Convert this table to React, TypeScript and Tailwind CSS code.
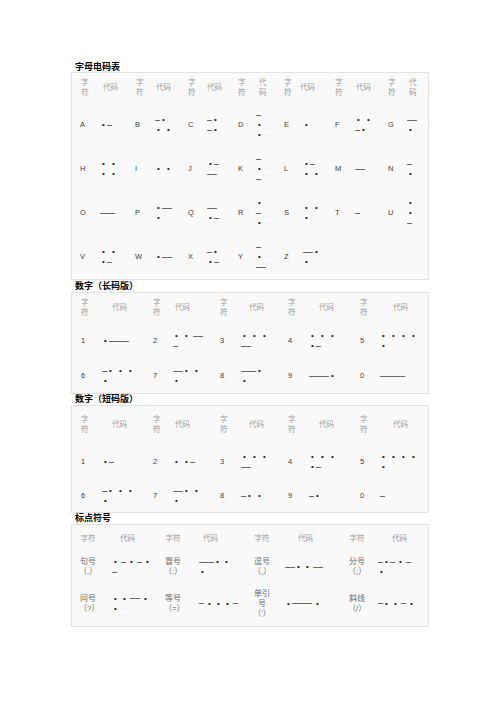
import React from "react";

type Entry = [string, string];

const HEAD = "text-[7.5px] leading-[10px] text-[#9c9c9c]";
const LABEL = "text-[7.5px] leading-[10px] text-[#3c3c3c]";
const TITLE = "pl-[4px] text-[9px] font-bold text-black";

const Sym = ({ ch, gap }: { ch: string; gap: string }) => {
  if (ch === "•") return <span className="w-[7px] shrink-0 text-center text-[8px]">•</span>;
  if (ch === "–") return <span className="w-[5px] shrink-0 text-center text-[9px]">–</span>;
  return <span className={gap} />;
};

const Code = ({ code, gap = "w-[3px] shrink-0" }: { code: string; gap?: string }) => (
  <div className="flex flex-col text-[#222]">
    {code.split("|").map((line, i) => (
      <div key={i} className="flex h-[10px] items-center leading-none">
        {Array.from(line).map((ch, j) => (
          <Sym key={j} ch={ch} gap={gap} />
        ))}
      </div>
    ))}
  </div>
);

const Stack = ({ text, className }: { text: string; className?: string }) => (
  <div className={className}>
    {text.split("|").map((t, i) => (
      <div key={i}>{t}</div>
    ))}
  </div>
);

// 字母
const T1_GRID =
  "grid grid-cols-[20px_35px_20px_33px_19px_31px_18px_28px_19px_32px_20px_33px_19px_21px] items-center";

const t1Head: Entry[] = [
  ["pl-[1px]", "字|符"],
  ["pl-[3px]", "代码"],
  ["pl-[1px]", "字|符"],
  ["pl-[1px]", "代码"],
  ["", "字|符"],
  ["", "代码"],
  ["", "字|符"],
  ["pl-[3px]", "代|码"],
  ["", "字|符"],
  ["-ml-[3px]", "代码"],
  ["", "字|符"],
  ["pl-[1px]", "代码"],
  ["", "字|符"],
  ["pl-[2px]", "代|码"],
];

const t1Rows: Entry[][] = [
  [["A", "•–"], ["B", "–•|• •"], ["C", "–•|–•"], ["D", "–|•|•"], ["E", "•"], ["F", "• •|–•"], ["G", "––|•"]],
  [["H", "• •|• •"], ["I", "• •"], ["J", "•–|––"], ["K", "–|•|–"], ["L", "•–|• •"], ["M", "––"], ["N", "–|•"]],
  [["O", "–––"], ["P", "•––|•"], ["Q", "––|•–"], ["R", "•|–|•"], ["S", "• •|•"], ["T", "–"], ["U", "•|•|–"]],
  [["V", "• •|•–"], ["W", "•––"], ["X", "–•|•–"], ["Y", "–|•|––"], ["Z", "––•|•"]],
];

// 数字
const T2_GRID = "grid grid-cols-[21px_51px_20px_47px_21px_47px_21px_51px_20px_48px] items-center";

const numHead: Entry[] = [
  ["", "字|符"],
  ["pl-[10px]", "代码"],
  ["", "字|符"],
  ["pl-[2px]", "代码"],
  ["", "字|符"],
  ["pl-[8px]", "代码"],
  ["", "字|符"],
  ["pl-[10px]", "代码"],
  ["", "字|符"],
  ["pl-[13px]", "代码"],
];

const longRows: Entry[][] = [
  [["1", "•––––"], ["2", "• • ––|–"], ["3", "• • •|––"], ["4", "• • •|•–"], ["5", "• • • •|•"]],
  [["6", "–• • •|•"], ["7", "––• •|•"], ["8", "–––•|•"], ["9", "––––•"], ["0", "–––––"]],
];

const shortRows: Entry[][] = [
  [["1", "•–"], ["2", "• •–"], ["3", "• • •|––"], ["4", "• • •|•–"], ["5", "• • • •|•"]],
  [["6", "–• • •|•"], ["7", "––• •|•"], ["8", "–• •"], ["9", "–•"], ["0", "–"]],
];

// 标点
const T4_GRID = "grid grid-cols-[33px_52px_35px_54px_32px_61px_32px_50px] items-center";
const t4CodeHead = ["pl-[8px]", "pl-[4px]", "pl-[13px]", "pl-[14px]"];
const t4LabelPad = ["", "", "", "ml-[2px]"];

const punctRows: Entry[][] = [
  [
    ["句号|（.）", "• – • – •|–"],
    ["冒号|（:）", "–––• •|•"],
    ["逗号|（,）", "––• • ––"],
    ["分号|（;）", "–•– • –|•"],
  ],
  [
    ["问号|（?）", "• • –– •|•"],
    ["等号|（=）", "– • • • –"],
    ["单引|号|（'）", "•–––– •"],
    ["斜线|（/）", "–• • – •"],
  ],
];

const NumTable = ({ rows, heights }: { rows: Entry[][]; heights: string[] }) => (
  <div className="border border-[#e3e3e3] bg-[#f9f9f9] pl-[9px]">
    <div className={`${T2_GRID} ${heights[0]}`}>
      {numHead.map(([pad, t], i) => (
        <Stack key={i} text={t} className={`${HEAD} ${pad} whitespace-nowrap`} />
      ))}
    </div>
    {rows.map((row, r) => (
      <div key={r} className={`${T2_GRID} ${heights[r + 1]}`}>
        {row.flatMap(([l, c], i) => [
          <div key={`l${i}`} className={LABEL}>
            {l}
          </div>,
          <Code key={`c${i}`} code={c} />,
        ])}
      </div>
    ))}
  </div>
);

export default function App() {
  return (
    <div className="min-h-[702px] w-full bg-white pt-[62px] font-['Liberation_Sans','Noto_Sans_CJK_SC',sans-serif]">
      <div className="ml-[71px] w-[358px]">
        <div className={`${TITLE} h-[10px] leading-[10px]`}>字母电码表</div>
        <div className="border border-[#e3e3e3] bg-[#f9f9f9] pl-[8px]">
          <div className={`${T1_GRID} h-[30px]`}>
            {t1Head.map(([pad, t], i) => (
              <Stack key={i} text={t} className={`${HEAD} ${pad} whitespace-nowrap`} />
            ))}
          </div>
          {t1Rows.map((row, r) => (
            <div key={r} className={`${T1_GRID} h-[44px]`}>
              {row.flatMap(([l, c], i) => [
                <div key={`l${i}`} className={LABEL}>
                  {l}
                </div>,
                <Code key={`c${i}`} code={c} />,
              ])}
            </div>
          ))}
        </div>

        <div className={`${TITLE} h-[12px] leading-[12px]`}>数字（长码版）</div>
        <NumTable rows={longRows} heights={["h-[30px]", "h-[36px]", "h-[34px]"]} />

        <div className={`${TITLE} h-[11px] leading-[11px]`}>数字（短码版）</div>
        <NumTable rows={shortRows} heights={["h-[38px]", "h-[36px]", "h-[32px]"]} />

        <div className={`${TITLE} h-[11px] leading-[11px]`}>标点符号</div>
        <div className="border border-[#e3e3e3] bg-[#f9f9f9] pl-[7px]">
          <div className={`${T4_GRID} h-[28px]`}>
            {t4CodeHead.flatMap((pad, i) => [
              <div key={`h${i}`} className={`${HEAD} ${t4LabelPad[i]} w-[18px] text-center`}>
                字符
              </div>,
              <div key={`k${i}`} className={`${HEAD} ${pad}`}>
                代码
              </div>,
            ])}
          </div>
          {punctRows.map((row, r) => (
            <div key={r} className={`${T4_GRID} ${r === 0 ? "h-[28px]" : "h-[45px]"}`}>
              {row.flatMap(([l, c], i) => [
                <Stack
                  key={`l${i}`}
                  text={l}
                  className={`${t4LabelPad[i]} w-[18px] whitespace-nowrap text-center text-[8px] leading-[10px] text-[#6a6a6a]`}
                />,
                <Code key={`c${i}`} code={c} gap="w-[2px] shrink-0" />,
              ])}
            </div>
          ))}
        </div>
      </div>
    </div>
  );
}
